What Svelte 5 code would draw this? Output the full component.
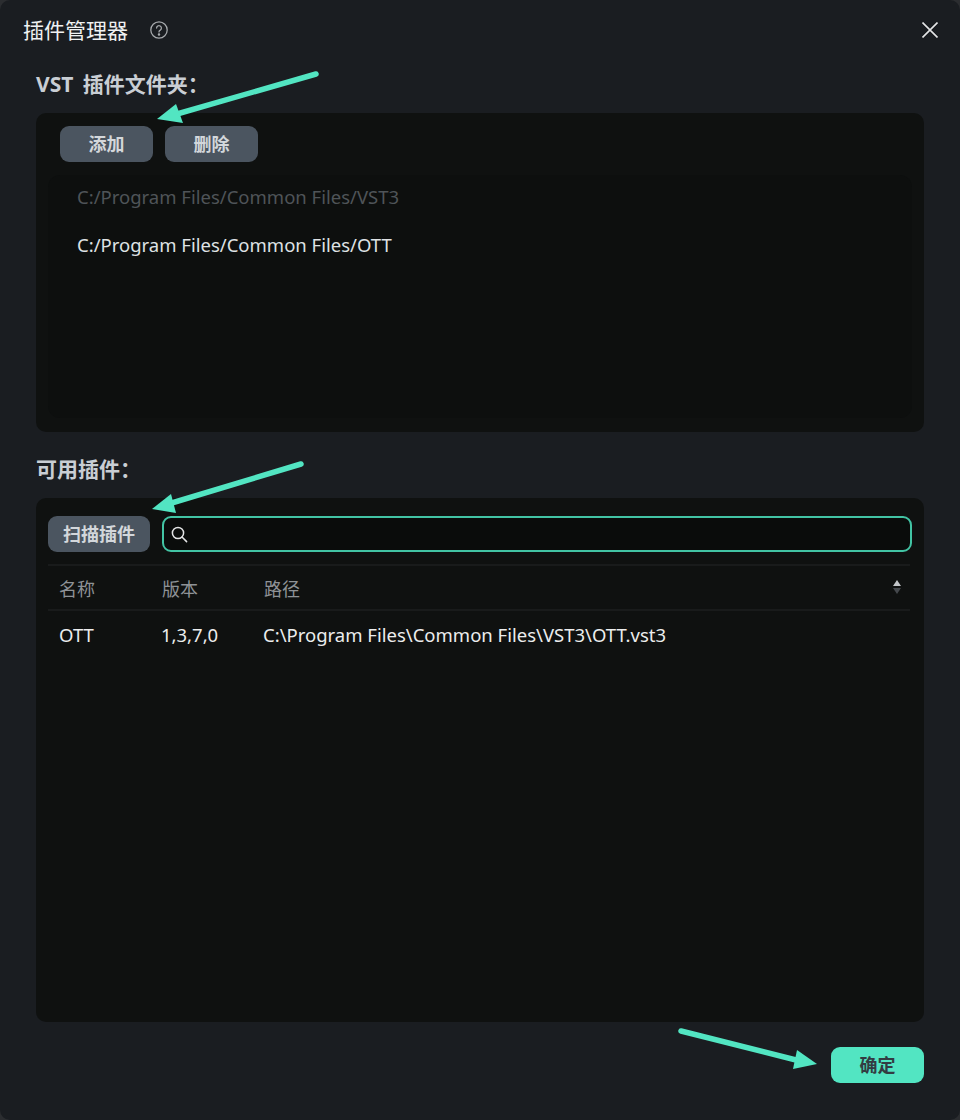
<script>
	const folders = [
		{ path: "C:/Program Files/Common Files/VST3", dim: true },
		{ path: "C:/Program Files/Common Files/OTT", dim: false },
	];
	const plugins = [
		{ name: "OTT", version: "1,3,7,0", path: "C:\\Program Files\\Common Files\\VST3\\OTT.vst3" },
	];
	// tail, tip and the two barbs of each annotation arrow
	const arrows = [
		{ tail: [316, 74], neck: [170, 116], head: "157,119 176,104 183,123" },
		{ tail: [301, 464], neck: [165, 505], head: "152,509 171,494 176,513" },
		{ tail: [681, 1031], neck: [800, 1061], head: "817,1064 797,1050 793,1069" },
	];
</script>

<div class="dialog">
	<header class="titlebar">
		<div class="title">
			<span class="title-text">插件管理器</span>
			<svg class="help" viewBox="0 0 18 18" width="18" height="18" fill="none" stroke="#a5a8ab" stroke-width="1.3">
				<circle cx="9" cy="9" r="8.2" />
				<path d="M6.6 7.1a2.4 2.4 0 1 1 3.7 2c-.9.5-1.3 1-1.3 1.8" stroke-linecap="round" />
				<circle cx="9" cy="13.4" r=".6" fill="#a5a8ab" />
			</svg>
		</div>
		<svg class="close" viewBox="0 0 16 16" width="16" height="16" stroke="#e4e5e6" stroke-width="1.6">
			<path d="M.5.5l15 15M15.5.5l-15 15" />
		</svg>
	</header>

	<h2 class="heading first">VST 插件文件夹：</h2>
	<section class="panel folders">
		<div class="actions">
			<button class="btn">添加</button>
			<button class="btn">删除</button>
		</div>
		<ul class="list">
			{#each folders as f}
				<li class:dim={f.dim}>{f.path}</li>
			{/each}
		</ul>
	</section>

	<h2 class="heading second">可用插件：</h2>
	<section class="panel plugins">
		<div class="toolbar">
			<button class="btn scan">扫描插件</button>
			<div class="search">
				<svg viewBox="0 0 17 17" width="17" height="17" fill="none" stroke="#e4e5e6" stroke-width="1.5">
					<circle cx="7" cy="7" r="5.6" />
					<path d="M11 11l4.6 4.6" stroke-linecap="round" />
				</svg>
			</div>
		</div>
		<div class="row head">
			<span class="c1">名称</span>
			<span class="c2">版本</span>
			<span class="c3">路径</span>
			<span class="sort">
				<i class="up"></i>
				<i class="down"></i>
			</span>
		</div>
		{#each plugins as p}
			<div class="row item">
				<span class="c1">{p.name}</span>
				<span class="c2">{p.version}</span>
				<span class="c3">{p.path}</span>
			</div>
		{/each}
	</section>

	<footer class="footer">
		<button class="btn ok">确定</button>
	</footer>

	<svg class="arrows" viewBox="0 0 960 1120" width="960" height="1120">
		{#each arrows as a}
			<line x1={a.tail[0]} y1={a.tail[1]} x2={a.neck[0]} y2={a.neck[1]} stroke="#52e5c2" stroke-width="5.5" stroke-linecap="round" />
			<polygon points={a.head} fill="#52e5c2" />
		{/each}
	</svg>
</div>

<style>
	:global(body) {
		margin: 0;
		background: #2b2d30;
	}
	.dialog {
		position: relative;
		box-sizing: border-box;
		width: 960px;
		height: 1120px;
		padding: 0 36px;
		background: #1a1d21;
		border-radius: 10px;
		font-family: "Noto Sans", "Noto Sans CJK SC", sans-serif;
		color: #e6e7e8;
		overflow: hidden;
	}
	.titlebar {
		display: flex;
		align-items: center;
		justify-content: space-between;
		height: 60px;
		margin: 0 -14px 0 -13px;
	}
	.title {
		display: flex;
		align-items: center;
		gap: 21px;
		font-size: 21px;
		color: #f0f1f2;
	}
	.title-text {
		padding-bottom: 2px;
	}
	.help {
		margin-left: 1px;
	}
	.heading {
		margin: 0;
		font-size: 21px;
		font-weight: 700;
		line-height: 28px;
		color: #c9ced4;
	}
	.heading.first {
		margin-top: 10px;
		margin-bottom: 15px;
		word-spacing: 4px;
	}
	.heading.second {
		margin-top: 23px;
		margin-bottom: 15px;
	}
	.panel {
		box-sizing: border-box;
		background: #0f1110;
		border-radius: 10px;
	}
	.folders {
		height: 319px;
		padding: 13px 12px 14px;
	}
	.actions {
		display: flex;
		gap: 12px;
		padding-left: 12px;
		margin-bottom: 13px;
	}
	.btn {
		box-sizing: border-box;
		width: 93px;
		height: 36px;
		padding: 0 0 2px;
		border: none;
		border-radius: 9px;
		background: #4b5560;
		color: #d3d7db;
		font-family: inherit;
		font-size: 18px;
		font-weight: 700;
	}
	.list {
		list-style: none;
		margin: 0;
		padding: 0 29px;
		height: 243px;
		background: #0d0f0e;
		border-radius: 12px;
		font-size: 18.5px;
	}
	.list li {
		height: 48px;
		line-height: 44px;
		color: #dfe2e4;
	}
	.list li.dim {
		color: #4f5458;
	}
	.plugins {
		height: 524px;
		padding: 18px 12px 0;
	}
	.toolbar {
		display: flex;
		gap: 12px;
		margin-bottom: 12px;
	}
	.scan {
		width: 102px;
	}
	.search {
		box-sizing: border-box;
		flex: 1;
		display: flex;
		align-items: center;
		height: 36px;
		padding-left: 7px;
		border: 2px solid #42c4a4;
		border-radius: 9px;
		background: #0a0c0b;
	}
	.row {
		box-sizing: border-box;
		display: flex;
		align-items: center;
		position: relative;
		padding-left: 11px;
		font-size: 18.5px;
	}
	.c1 {
		width: 102px;
	}
	.c2 {
		width: 102px;
	}
	.head {
		height: 47px;
		width: 862px;
		border-top: 2px solid #191b1b;
		border-bottom: 2px solid #191b1b;
		color: #8e9296;
		font-size: 18px;
	}
	.head .c1 {
		width: 103px;
	}
	.item {
		height: 48px;
		padding-bottom: 2px;
		color: #eceded;
	}
	.sort {
		position: absolute;
		right: 9px;
		top: 14px;
		display: flex;
		flex-direction: column;
		gap: 2px;
	}
	.sort i {
		width: 0;
		height: 0;
		border-left: 4.5px solid transparent;
		border-right: 4.5px solid transparent;
	}
	.up {
		border-bottom: 6px solid #c2c5c8;
	}
	.down {
		border-top: 6px solid #44484c;
	}
	.footer {
		display: flex;
		justify-content: flex-end;
		margin-top: 25px;
	}
	.ok {
		background: #52e5c2;
		color: #333c42;
	}
	.arrows {
		position: absolute;
		left: 0;
		top: 0;
		pointer-events: none;
	}
</style>
